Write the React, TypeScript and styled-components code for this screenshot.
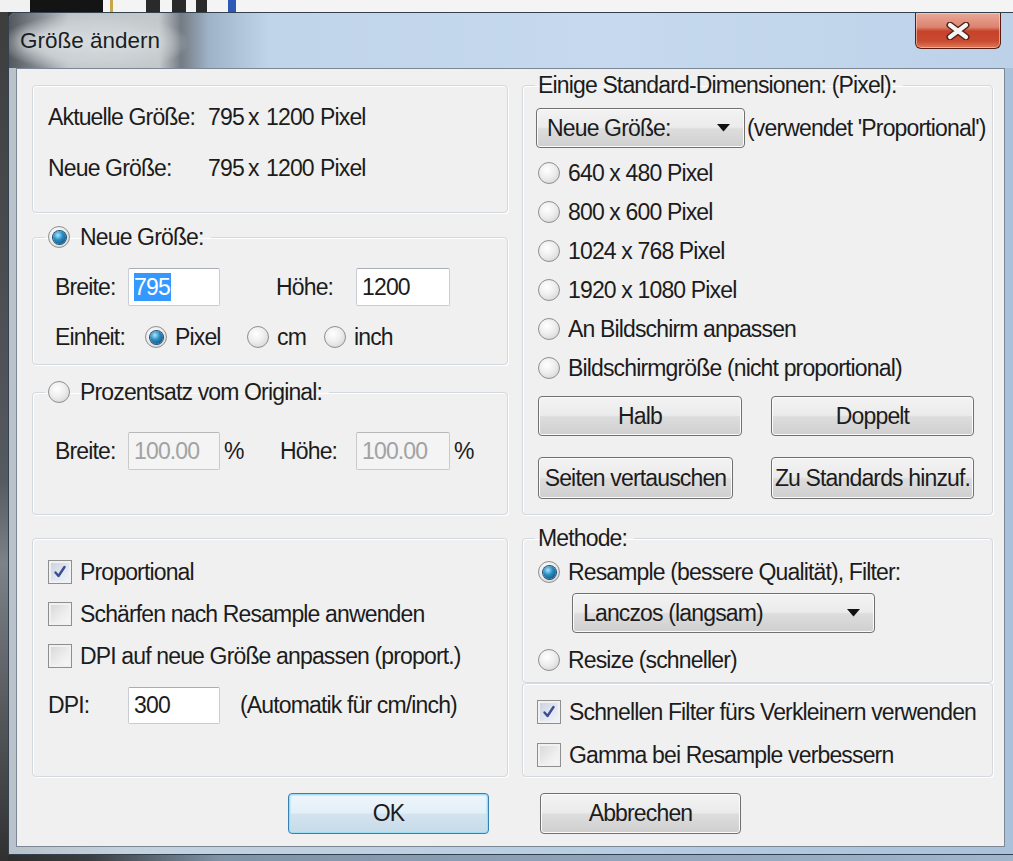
import React from "react";
import styled, { createGlobalStyle } from "styled-components";

const GlobalStyle = createGlobalStyle`
  html, body {
    margin: 0;
    padding: 0;
  }
  body {
    overflow: hidden;
    background: #5d6670;
    font-family: "Liberation Sans", Arial, sans-serif;
  }
`;

/* ---------- desktop around the dialog ---------- */

const Desktop = styled.div`
  width: 1013px;
  height: 861px;
  display: flex;
  flex-direction: column;
  overflow: hidden;
  background: linear-gradient(90deg, #2c2c2c 0, #3a3d41 90px, #7f93a8 220px, #9fb6cd 100%);
`;

const TopStrip = styled.div`
  flex: none;
  height: 12px;
  background:
    linear-gradient(90deg, transparent 0 110px, #c9a54a 110px 113px, transparent 113px),
    linear-gradient(90deg, transparent 0 146px, #2a2a2a 146px 160px, transparent 160px 172px, #2a2a2a 172px 186px, transparent 186px 196px, #2a2a2a 196px 207px, transparent 207px),
    linear-gradient(90deg, transparent 0 228px, #2c58b8 228px 236px, transparent 236px),
    linear-gradient(90deg, #f1f1f1 0 30px, #141414 30px 103px, #f4f4f4 103px);
`;

const Stage = styled.div`
  flex: 1;
  display: flex;
`;

const LeftEdge = styled.div`
  width: 8px;
  flex: none;
  background: linear-gradient(180deg, #3d3d3d 0, #555a60 55%, #7c8288 65%, #303030 100%);
`;

const Window = styled.div`
  width: 1005px;
  height: 843px;
  flex: none;
  box-sizing: border-box;
  display: flex;
  flex-direction: column;
  border: 1px solid #33404d;
  border-right: none;
  border-radius: 7px 0 0 0;
  background: linear-gradient(90deg, #b9c2ca 0, #c4d2df 12%, #b8cde3 60%, #a9c1da 100%);
`;

const TitleBar = styled.div`
  height: 55px;
  flex: none;
  display: flex;
  align-items: center;
  justify-content: space-between;
  padding-left: 11px;
  border-radius: 6px 0 0 0;
  background:
    radial-gradient(ellipse 95px 30px at 85px 30px, rgba(214, 218, 221, 0.95) 0, rgba(205, 210, 214, 0.9) 60%, rgba(205, 210, 214, 0) 100%),
    linear-gradient(90deg, #53585e 0, #8c9298 35px, #bfc4c8 60px, #c3c8cb 150px, #747b83 172px, #9fb3c8 200px, #c0d4ea 260px, #c6d9ee 600px, #bdd2e9 100%);
`;

const TitleText = styled.span`
  font-size: 22.5px;
  color: #1b1f24;
  text-shadow: 0 0 8px rgba(235, 238, 240, 0.9);
  white-space: nowrap;
`;

const CloseButton = styled.div`
  align-self: flex-start;
  width: 86px;
  height: 36px;
  margin-right: 12px;
  box-sizing: border-box;
  display: flex;
  align-items: center;
  justify-content: center;
  border: 1px solid #5a1c12;
  border-top: none;
  border-radius: 0 0 6px 6px;
  background: linear-gradient(180deg, #e8a898 0, #dc8470 40%, #c7422a 52%, #c94a31 80%, #e07a58 100%);
  box-shadow: inset 0 0 0 1px rgba(255, 220, 210, 0.55);
`;

/* ---------- client area ---------- */

const Client = styled.div`
  width: 989px;
  height: 779px;
  margin: 0 8px 0 7px;
  box-sizing: border-box;
  padding: 4px 11px 0 15px;
  border: 1px solid #7b8794;
  background: #f0f0f0;
  color: #1c1c1c;
  font-size: 23px;
  letter-spacing: -0.85px;
  display: flex;
  flex-direction: column;
`;

const Row = styled.div<{ $mt?: number }>`
  display: flex;
  gap: 14px;
  margin-top: ${(p) => p.$mt ?? 0}px;
`;

const Column = styled.div<{ $w: number }>`
  width: ${(p) => p.$w}px;
  flex: none;
  display: flex;
  flex-direction: column;
`;

const Group = styled.fieldset<{ $h: number; $mt?: number }>`
  box-sizing: border-box;
  height: ${(p) => p.$h}px;
  margin: ${(p) => p.$mt ?? 0}px 0 0;
  padding: 0;
  min-width: 0;
  border: 1px solid #d3d9de;
  border-radius: 4px;
  box-shadow: inset 1px 1px 0 #ffffff, 1px 1px 0 #ffffff;
`;

const Caption = styled.legend`
  margin-left: 12px;
  padding: 0 7px 0 3px;
  height: 24px;
  line-height: 24px;
`;

const CaptionInner = styled.span`
  display: inline-flex;
  align-items: center;
  gap: 10px;
  height: 24px;
  vertical-align: top;
`;

const Text = styled.span`
  white-space: nowrap;
`;

/* ---------- controls ---------- */

const RadioDot = styled.span<{ $on?: boolean }>`
  width: 22px;
  height: 22px;
  flex: none;
  box-sizing: border-box;
  border-radius: 50%;
  border: 1px solid #8d8f91;
  background: radial-gradient(circle at 40% 35%, #ffffff 0, #eeeeee 45%, #cdcdcd 100%);
  display: inline-flex;
  align-items: center;
  justify-content: center;

  &::after {
    content: "";
    display: ${(p) => (p.$on ? "block" : "none")};
    width: 13px;
    height: 13px;
    border-radius: 50%;
    background: radial-gradient(circle at 38% 32%, #a8e6ff 0, #2a8cc2 40%, #093f6a 100%);
    box-shadow: 0 0 0 1px #1d4f73;
  }
`;

const CheckBox = styled.span<{ $on?: boolean }>`
  width: 24px;
  height: 24px;
  flex: none;
  box-sizing: border-box;
  border: 1px solid #8e8f8f;
  background: ${(p) =>
    p.$on
      ? "linear-gradient(135deg, #c9cfe0 0, #e4e8f2 60%, #f3f5fa 100%)"
      : "linear-gradient(135deg, #d6d6d6 0, #eeeeee 60%, #f8f8f8 100%)"};
  box-shadow: inset 0 0 0 2px #f1f1f1;
  display: inline-flex;
  align-items: center;
  justify-content: center;
`;

const Option = styled.span`
  display: inline-flex;
  align-items: center;
  gap: 8px;
  height: 30px;
`;

const Field = styled.div<{ $w: number; $h?: number; $disabled?: boolean }>`
  width: ${(p) => p.$w}px;
  height: ${(p) => p.$h ?? 38}px;
  flex: none;
  box-sizing: border-box;
  display: flex;
  align-items: center;
  padding-left: 5px;
  border: 1px solid ${(p) => (p.$disabled ? "#cacaca" : "#c9ccd2")};
  border-top-color: ${(p) => (p.$disabled ? "#b8b8b8" : "#a9adb5")};
  border-radius: 2px;
  background: ${(p) => (p.$disabled ? "#f4f4f4" : "#ffffff")};
  color: ${(p) => (p.$disabled ? "#a2a2a2" : "#1c1c1c")};
`;

const Selected = styled.span`
  background: #3399ff;
  color: #ffffff;
  line-height: 28px;
  padding-right: 1px;
`;

const PushButton = styled.div<{ $w: number; $h: number; $default?: boolean }>`
  width: ${(p) => p.$w}px;
  height: ${(p) => p.$h}px;
  flex: none;
  box-sizing: border-box;
  display: flex;
  align-items: center;
  justify-content: center;
  border: 1px solid ${(p) => (p.$default ? "#3b7fb0" : "#707070")};
  border-radius: 4px;
  background: ${(p) =>
    p.$default
      ? "linear-gradient(180deg, #eef6fb 0, #e3eff7 48%, #d3e4ef 52%, #c6dae8 100%)"
      : "linear-gradient(180deg, #f3f3f3 0, #ebebeb 48%, #dddddd 52%, #cfcfcf 100%)"};
  box-shadow: inset 0 0 0 1px ${(p) => (p.$default ? "#9fdcf5" : "#fbfbfb")},
    inset 0 0 0 2px ${(p) => (p.$default ? "rgba(178, 230, 250, 0.6)" : "transparent")};
  white-space: nowrap;
`;

const Combo = styled(PushButton)`
  justify-content: space-between;
  padding: 0 14px 0 10px;
`;

const Arrow = () => (
  <svg width="13" height="8" viewBox="0 0 13 8">
    <path d="M0 0 H13 L6.5 7.5 Z" fill="#111" />
  </svg>
);

const Tick = () => (
  <svg width="16" height="16" viewBox="0 0 16 16">
    <path d="M3.5 8.5 L6.5 12 L12.5 3" fill="none" stroke="#3a4d8f" strokeWidth="2.4" strokeLinecap="round" strokeLinejoin="round" />
  </svg>
);

const CloseGlyph = () => (
  <svg width="26" height="18" viewBox="0 0 26 18">
    <path d="M5 3 L21 15 M21 3 L5 15" stroke="#4e2018" strokeWidth="7" strokeLinecap="round" />
    <path d="M5 3 L21 15 M21 3 L5 15" stroke="#f6f6f6" strokeWidth="4.2" strokeLinecap="round" />
  </svg>
);

const Radio: React.FC<{ on?: boolean; label: string }> = ({ on, label }) => (
  <Option>
    <RadioDot $on={on} />
    <Text>{label}</Text>
  </Option>
);

const Check: React.FC<{ on?: boolean; label: string }> = ({ on, label }) => (
  <Option>
    <CheckBox $on={on}>{on && <Tick />}</CheckBox>
    <Text>{label}</Text>
  </Option>
);

/* ---------- group contents ---------- */

const SizeGrid = styled.div`
  display: grid;
  grid-template-columns: 160px 40px 18px 54px auto;
  grid-auto-rows: 30px;
  row-gap: 21px;
  align-items: center;
  padding: 16px 0 0 15px;
`;

const FieldRow = styled.div<{ $cols: string; $mt: number; $h?: number }>`
  display: grid;
  grid-template-columns: ${(p) => p.$cols};
  align-items: center;
  height: ${(p) => p.$h ?? 30}px;
  margin-top: ${(p) => p.$mt}px;
  padding-left: 22px;
`;

const Percent = styled.span`
  display: flex;
  align-items: center;
  gap: 4px;
`;

const Stack = styled.div<{ $gap: number; $pt?: number; $pl?: number }>`
  display: flex;
  flex-direction: column;
  gap: ${(p) => p.$gap}px;
  padding: ${(p) => p.$pt ?? 0}px 0 0 ${(p) => p.$pl ?? 15}px;
`;

const DpiRow = styled.div`
  display: grid;
  grid-template-columns: 80px 112px auto;
  align-items: center;
  height: 37px;
  margin-top: 4px;
`;

const ComboRow = styled.div<{ $mt: number; $pl: number }>`
  display: flex;
  align-items: center;
  gap: 2px;
  margin-top: ${(p) => p.$mt}px;
  padding-left: ${(p) => p.$pl}px;
`;

const ButtonGrid = styled.div`
  display: grid;
  grid-template-columns: 204px 203px;
  grid-template-rows: 40px 42px;
  column-gap: 29px;
  row-gap: 21px;
  margin-top: 13px;
  padding-left: 15px;
`;

const DialogButtons = styled.div`
  display: flex;
  justify-content: center;
  gap: 51px;
  margin-top: 16px;
  padding-left: 4px;
`;

const App: React.FC = () => {
  return (
    <>
      <GlobalStyle />
      <Desktop>
        <TopStrip />
        <Stage>
          <LeftEdge />
          <Window>
            <TitleBar>
              <TitleText>Größe ändern</TitleText>
              <CloseButton>
                <CloseGlyph />
              </CloseButton>
            </TitleBar>
            <Client>
              <Row>
                <Column $w={476}>
                  <Group $h={128} $mt={12}>
                    <SizeGrid>
                      <Text>Aktuelle Größe:</Text>
                      <Text>795</Text>
                      <Text>x</Text>
                      <Text>1200</Text>
                      <Text>Pixel</Text>
                      <Text>Neue Größe:</Text>
                      <Text>795</Text>
                      <Text>x</Text>
                      <Text>1200</Text>
                      <Text>Pixel</Text>
                    </SizeGrid>
                  </Group>

                  <Group $h={140} $mt={12}>
                    <Caption>
                      <CaptionInner>
                        <RadioDot $on />
                        <Text>Neue Größe:</Text>
                      </CaptionInner>
                    </Caption>
                    <FieldRow $cols="73px 148px 80px 94px" $mt={19} $h={38}>
                      <Text>Breite:</Text>
                      <Field $w={92}>
                        <Selected>795</Selected>
                      </Field>
                      <Text>Höhe:</Text>
                      <Field $w={94}>1200</Field>
                    </FieldRow>
                    <FieldRow $cols="90px 102px 77px auto" $mt={16}>
                      <Text>Einheit:</Text>
                      <Radio on label="Pixel" />
                      <Radio label="cm" />
                      <Radio label="inch" />
                    </FieldRow>
                  </Group>

                  <Group $h={135} $mt={15}>
                    <Caption>
                      <CaptionInner>
                        <RadioDot />
                        <Text>Prozentsatz vom Original:</Text>
                      </CaptionInner>
                    </Caption>
                    <FieldRow $cols="73px 152px 76px auto" $mt={28} $h={38}>
                      <Text>Breite:</Text>
                      <Percent>
                        <Field $w={92} $disabled>100.00</Field>
                        <Text>%</Text>
                      </Percent>
                      <Text>Höhe:</Text>
                      <Percent>
                        <Field $w={94} $disabled>100.00</Field>
                        <Text>%</Text>
                      </Percent>
                    </FieldRow>
                  </Group>
                </Column>

                <Column $w={471}>
                  <Group $h={442}>
                    <Caption>
                      <Text>Einige Standard-Dimensionen: (Pixel):</Text>
                    </Caption>
                    <ComboRow $mt={11} $pl={13}>
                      <Combo $w={209} $h={40}>
                        <Text>Neue Größe:</Text>
                        <Arrow />
                      </Combo>
                      <Text>(verwendet 'Proportional')</Text>
                    </ComboRow>
                    <Stack $gap={9} $pt={10}>
                      <Radio label="640 x 480 Pixel" />
                      <Radio label="800 x 600 Pixel" />
                      <Radio label="1024 x 768 Pixel" />
                      <Radio label="1920 x 1080 Pixel" />
                      <Radio label="An Bildschirm anpassen" />
                      <Radio label="Bildschirmgröße (nicht proportional)" />
                    </Stack>
                    <ButtonGrid>
                      <PushButton $w={204} $h={40}>Halb</PushButton>
                      <PushButton $w={203} $h={40}>Doppelt</PushButton>
                      <PushButton $w={195} $h={42}>Seiten vertauschen</PushButton>
                      <PushButton $w={203} $h={42}>Zu Standards hinzuf.</PushButton>
                    </ButtonGrid>
                  </Group>
                </Column>
              </Row>

              <Row $mt={11}>
                <Column $w={476}>
                  <Group $h={239} $mt={12}>
                    <Stack $gap={12} $pt={18}>
                      <Check on label="Proportional" />
                      <Check label="Schärfen nach Resample anwenden" />
                      <Check label="DPI auf neue Größe anpassen (proport.)" />
                      <DpiRow>
                        <Text>DPI:</Text>
                        <Field $w={92} $h={37}>300</Field>
                        <Text>(Automatik für cm/inch)</Text>
                      </DpiRow>
                    </Stack>
                  </Group>
                </Column>

                <Column $w={471}>
                  <Group $h={157}>
                    <Caption>
                      <Text>Methode:</Text>
                    </Caption>
                    <Stack $gap={0} $pt={7}>
                      <Radio on label="Resample (bessere Qualität), Filter:" />
                    </Stack>
                    <ComboRow $mt={6} $pl={49}>
                      <Combo $w={303} $h={40}>
                        <Text>Lanczos (langsam)</Text>
                        <Arrow />
                      </Combo>
                    </ComboRow>
                    <Stack $gap={0} $pt={12}>
                      <Radio label="Resize (schneller)" />
                    </Stack>
                  </Group>
                  <Group $h={94}>
                    <Stack $gap={13} $pt={13} $pl={14}>
                      <Check on label="Schnellen Filter fürs Verkleinern verwenden" />
                      <Check label="Gamma bei Resample verbessern" />
                    </Stack>
                  </Group>
                </Column>
              </Row>

              <DialogButtons>
                <PushButton $w={201} $h={41} $default>OK</PushButton>
                <PushButton $w={201} $h={41}>Abbrechen</PushButton>
              </DialogButtons>
            </Client>
          </Window>
        </Stage>
      </Desktop>
    </>
  );
};

export default App;
